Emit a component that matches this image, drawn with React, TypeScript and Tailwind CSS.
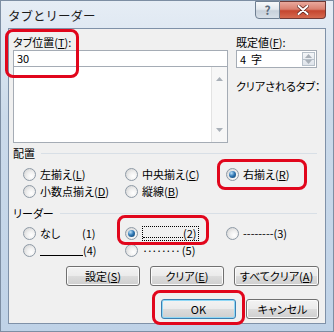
import type { ReactNode } from "react";

function Key({ children }: { children: ReactNode }) {
  return <span className="underline underline-offset-[1px]">{children}</span>;
}

function Radio({ checked = false }: { checked?: boolean }) {
  return (
    <span className="flex h-[13px] w-[13px] shrink-0 items-center justify-center rounded-full border border-[#8e9aa6] bg-[radial-gradient(circle_at_65%_65%,#ffffff_0%,#f0f0f0_40%,#cdcdcd_100%)]">
      {checked && (
        <span className="h-[7px] w-[7px] rounded-full bg-[radial-gradient(circle_at_35%_30%,#bfe4fb_0%,#3279b6_45%,#0c3a62_100%)]" />
      )}
    </span>
  );
}

function Option({ checked, children }: { checked?: boolean; children: ReactNode }) {
  return (
    <div className="flex h-[17px] items-center gap-[4px]">
      <Radio checked={checked} />
      <span className="whitespace-nowrap leading-[13px]">{children}</span>
    </div>
  );
}

function Group({ title }: { title: string }) {
  return (
    <div className="flex h-[13px] items-center gap-[6px] pr-[2px]">
      <span className="leading-[13px]">{title}</span>
      <div className="h-px flex-1 bg-[#d8dfe6]" />
    </div>
  );
}

function Button({
  width,
  isDefault = false,
  children,
}: {
  width: string;
  isDefault?: boolean;
  children: ReactNode;
}) {
  return (
    <div
      className={`${width} flex h-[20px] items-center justify-center whitespace-nowrap rounded-[3px] border bg-[linear-gradient(to_bottom,#f3f3f3_0%,#ebebeb_48%,#dcdcdc_52%,#cfcfcf_100%)] leading-[13px] ${
        isDefault
          ? "border-[#3c7fb1] shadow-[inset_0_0_0_1px_#8fd8f6]"
          : "border-[#707070] shadow-[inset_0_0_0_1px_#fbfbfb]"
      }`}
    >
      {children}
    </div>
  );
}

function Highlight({ className }: { className: string }) {
  return (
    <div
      className={`pointer-events-none absolute rounded-[8px] border-[3px] border-[#e1061c] ${className}`}
    />
  );
}

function Triangle({ up }: { up?: boolean }) {
  return (
    <svg width="7" height="4" viewBox="0 0 7 4">
      <path d={up ? "M0 4 L3.5 0 L7 4 Z" : "M0 0 L3.5 4 L7 0 Z"} fill="#a9b0b8" />
    </svg>
  );
}

export default function App() {
  return (
    <div className="relative flex h-[332px] w-[334px] flex-col border border-[#7d8ea3] bg-[linear-gradient(to_bottom,#e6edf5_0%,#cbdaea_35%,#bfd2e7_100%)] px-[7px] pb-[7px] font-['Noto_Sans_CJK_JP',sans-serif] text-[11px] text-black [font-feature-settings:'palt']">
      {/* title bar */}
      <div className="flex h-[27px] shrink-0 items-start">
        <span className="mt-[8px] text-[12.5px] leading-[14px] text-[#1b1b1b] [font-feature-settings:normal]">
          タブとリーダー
        </span>
        <div className="ml-auto flex">
          <div className="flex h-[18px] w-[25px] items-center justify-center rounded-bl-[4px] border border-[#6f7f92] bg-[linear-gradient(to_bottom,#f7f9fb_0%,#e3e8ee_45%,#c8d1db_55%,#d7dfe8_100%)] text-[12px] font-bold leading-none text-[#5c6a7a]">
            ?
          </div>
          <div className="flex h-[18px] w-[46px] items-center justify-center rounded-br-[4px] border border-l-0 border-[#6f3a36] bg-[linear-gradient(to_bottom,#e9a99d_0%,#d9806f_45%,#c5462f_55%,#d56a4f_100%)]">
            <svg width="12" height="10" viewBox="0 0 12 10">
              <path d="M1.5 1 L10.5 9 M10.5 1 L1.5 9" stroke="#5a1f18" strokeWidth="3.4" strokeLinecap="round" />
              <path d="M1.5 1 L10.5 9 M10.5 1 L1.5 9" stroke="#ffffff" strokeWidth="2" strokeLinecap="round" />
            </svg>
          </div>
        </div>
      </div>

      {/* client area */}
      <div className="flex flex-1 flex-col border border-[#7f91a8] bg-[#f0f0f0] pl-[4px] pr-[6px] pt-[7px]">
        <div className="flex gap-[8px]">
          <div className="flex w-[215px] flex-col">
            <div className="h-[13px] leading-[13px]">
              タブ位置(<Key>T</Key>):
            </div>
            <div className="mt-[1px] flex h-[17px] items-center border border-[#a5acb5] bg-white pl-[3px] leading-[13px]">
              30
            </div>
            <div className="-mt-px flex h-[77px] border border-[#a5acb5] bg-white">
              <div className="flex-1" />
              <div className="flex w-[16px] flex-col items-center justify-between border-l border-[#e3e3e3] bg-[#f7f7f7] py-[10px]">
                <Triangle up />
                <Triangle />
              </div>
            </div>
          </div>
          <div className="flex w-[81px] flex-col">
            <div className="h-[13px] leading-[13px]">
              既定値(<Key>F</Key>):
            </div>
            <div className="mt-[1px] flex h-[18px] items-stretch border border-[#a5acb5] bg-white">
              <span className="flex flex-1 items-center pl-[3px] leading-[13px]">4&nbsp;&nbsp;字</span>
              <div className="my-px mr-px flex w-[13px] flex-col border border-[#b7c0c9] bg-[linear-gradient(to_bottom,#f4f6f8,#dfe4ea)]">
                <div className="flex flex-1 items-center justify-center border-b border-[#b7c0c9]">
                  <Triangle up />
                </div>
                <div className="flex flex-1 items-center justify-center">
                  <Triangle />
                </div>
              </div>
            </div>
            <div className="mt-[12px] whitespace-nowrap leading-[13px]">クリアされるタブ：</div>
          </div>
        </div>

        <div className="mt-[4px]">
          <Group title="配置" />
        </div>
        <div className="mt-[6px] grid grid-cols-[102px_101px_1fr] pl-[10px]">
          <Option>
            左揃え(<Key>L</Key>)
          </Option>
          <Option>
            中央揃え(<Key>C</Key>)
          </Option>
          <Option checked>
            右揃え(<Key>R</Key>)
          </Option>
          <Option>
            小数点揃え(<Key>D</Key>)
          </Option>
          <Option>
            縦線(<Key>B</Key>)
          </Option>
        </div>

        <div className="mt-[7px]">
          <Group title="リーダー" />
        </div>
        <div className="mt-[5px] grid grid-cols-[102px_101px_1fr] pl-[10px]">
          <Option>
            <span className="inline-block w-[42px]">なし</span>(1)
          </Option>
          <Option checked>
            <span className="flex items-center border border-dotted border-black pr-[1px]">
              <span className="mt-[7px] inline-block w-[40px] border-b border-dotted border-black" />
              (2)
            </span>
          </Option>
          <Option>--------(3)</Option>
          <Option>
            <span className="flex items-center">
              <span className="mt-[9px] inline-block w-[43px] border-b border-black" />
              (4)
            </span>
          </Option>
          <Option>
            <span className="tracking-[-1.5px]">········</span> (5)
          </Option>
        </div>

        <div className="mt-[7px] flex justify-end gap-[10px]">
          <Button width="w-[74px]">
            設定(<Key>S</Key>)
          </Button>
          <Button width="w-[74px]">
            クリア(<Key>E</Key>)
          </Button>
          <Button width="w-[85px]">
            すべてクリア(<Key>A</Key>)
          </Button>
        </div>
        <div className="mt-[13px] flex justify-end gap-[10px]">
          <Button width="w-[75px]" isDefault>
            OK
          </Button>
          <Button width="w-[73px]">キャンセル</Button>
        </div>
      </div>

      <Highlight className="left-[4px] top-[28px] h-[49px] w-[74px]" />
      <Highlight className="left-[216px] top-[158px] h-[31px] w-[90px]" />
      <Highlight className="left-[116px] top-[214px] h-[30px] w-[92px]" />
      <Highlight className="left-[151px] top-[289px] h-[35px] w-[93px]" />
    </div>
  );
}
